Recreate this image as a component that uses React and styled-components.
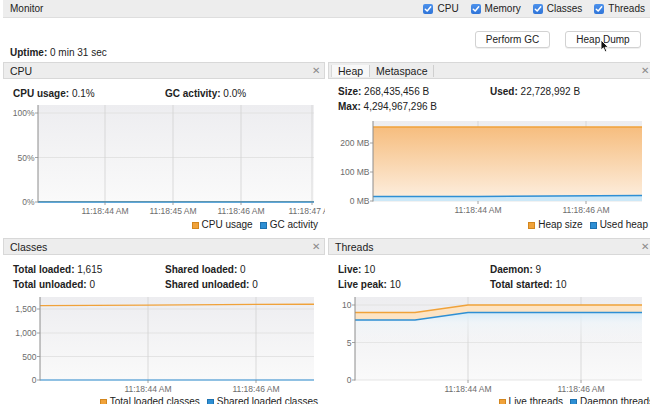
import React from "react";
import styled, { createGlobalStyle } from "styled-components";

const ORANGE = "#f0a23a";
const BLUE = "#2e8fd4";

const GlobalStyle = createGlobalStyle`
  html, body {
    margin: 0;
    padding: 0;
    background: #fff;
  }
  body {
    font-family: "Liberation Sans", Arial, sans-serif;
  }
`;

const Frame = styled.div`
  width: 650px;
  height: 404px;
  overflow: hidden;
  position: relative;
  background: #fff;
`;

const Inner = styled.div`
  width: 654px;
  height: 404px;
  box-sizing: border-box;
  padding-left: 3px;
  display: flex;
  flex-direction: column;
  font-family: "Liberation Sans", Arial, sans-serif;
  font-size: 10px;
  color: #222;
`;

const TopBar = styled.div`
  height: 18px;
  flex: none;
  box-sizing: border-box;
  background: #ededed;
  border-bottom: 1px solid #dedede;
  display: flex;
  align-items: center;
  justify-content: space-between;
  padding: 0 9px 0 7px;
`;

const Checks = styled.div`
  display: flex;
  align-items: center;
  gap: 12px;
`;

const CheckItem = styled.label`
  display: flex;
  align-items: center;
  gap: 4px;
`;

const Box = styled.span`
  width: 10px;
  height: 10px;
  border-radius: 2px;
  background: linear-gradient(#4d92ec, #2f74d8);
  display: flex;
  align-items: center;
  justify-content: center;
`;

const UptimeRow = styled.div`
  height: 44px;
  flex: none;
  display: flex;
  justify-content: space-between;
  align-items: flex-start;
  padding: 0 13px 0 7px;
`;

const Uptime = styled.div`
  margin-top: 29px;
  line-height: 12px;
  b {
    font-weight: bold;
  }
`;

const Buttons = styled.div`
  display: flex;
  gap: 15px;
  margin-top: 13px;
`;

const Button = styled.button`
  height: 17px;
  width: ${(p) => p.$w}px;
  padding: 0;
  background: #fff;
  border: 1px solid #d2d2d2;
  border-radius: 3px;
  box-shadow: 0 1px 0 rgba(0, 0, 0, 0.06);
  font-family: "Liberation Sans", Arial, sans-serif;
  font-size: 10px;
  color: #222;
`;

const Grid = styled.div`
  flex: 1;
  display: grid;
  grid-template-columns: 322px 326px;
  grid-template-rows: 174px 1fr;
  column-gap: 3px;
  row-gap: 2px;
  min-height: 0;
`;

const Panel = styled.div`
  display: flex;
  flex-direction: column;
  overflow: hidden;
  background: #fff;
`;

const PanelHeader = styled.div`
  height: 17px;
  flex: none;
  box-sizing: border-box;
  background: #ededed;
  border: 1px solid #d8d8d8;
  display: flex;
  align-items: stretch;
  justify-content: space-between;
  padding: 0 4px 0 ${(p) => (p.$tabs ? 2 : 6)}px;
  font-size: 10.5px;
`;

const Title = styled.div`
  display: flex;
  align-items: center;
`;

const Tab = styled.div`
  display: flex;
  align-items: center;
  padding: 0 6px;
  background: ${(p) => (p.$active ? "#f8f8f8" : "transparent")};
  border-right: 1px solid #cfcfcf;
  border-left: ${(p) => (p.$active ? "1px solid #d8d8d8" : "none")};
`;

const Close = styled.div`
  display: flex;
  align-items: center;
  color: #8a8a8a;
  font-size: 10px;
`;

const Stats = styled.div`
  display: grid;
  grid-template-columns: 152px 1fr;
  grid-auto-rows: 15px;
  align-content: start;
  box-sizing: border-box;
  padding: ${(p) => p.$top}px 10px 0;
  line-height: 15px;
  height: ${(p) => p.$h}px;
  flex: none;
  b {
    font-weight: bold;
  }
`;

const ChartSvg = styled.svg`
  display: block;
  flex: none;
  font-family: "Liberation Sans", Arial, sans-serif;
  font-size: 8.5px;
  text {
    fill: #6c6c6c;
  }
`;

const Legend = styled.div`
  display: flex;
  justify-content: flex-end;
  align-items: center;
  gap: 7px;
  padding-right: ${(p) => p.$pr}px;
  margin-top: ${(p) => p.$mt}px;
  line-height: 14px;
  font-size: 10px;
`;

const LegendItem = styled.div`
  display: flex;
  align-items: center;
  gap: 3px;
`;

const Swatch = styled.span`
  width: 7px;
  height: 7px;
  background: ${(p) => p.$c};
  border: 1px solid ${(p) => (p.$c === ORANGE ? "#d2861e" : "#1f72b0")};
  box-sizing: border-box;
`;

const Cursor = styled.svg`
  position: absolute;
  left: 600px;
  top: 39px;
`;

function Check({ label }) {
  return (
    <CheckItem>
      <Box>
        <svg width="8" height="8" viewBox="0 0 8 8">
          <path d="M1.3 4.2 L3.2 6 L6.7 1.8" stroke="#fff" strokeWidth="1.5" fill="none" strokeLinecap="round" strokeLinejoin="round" />
        </svg>
      </Box>
      {label}
    </CheckItem>
  );
}

function Chart({ width, height, x0, x1, top, bottom, yTicks, xTicks, id, children }) {
  return (
    <ChartSvg width={width} height={height}>
      <defs>
        <linearGradient id={id} x1="0" y1="0" x2="0" y2="1">
          <stop offset="0" stopColor="#ededf0" />
          <stop offset="1" stopColor="#fafafa" />
        </linearGradient>
      </defs>
      <rect x={x0} y={top} width={x1 - x0} height={bottom - top} fill={`url(#${id})`} />
      {yTicks.map((t) => (
        <line key={"gy" + t.label} x1={x0} x2={x1} y1={t.y} y2={t.y} stroke="#dedede" strokeWidth="0.8" />
      ))}
      {xTicks.map((t) => (
        <line key={"gx" + t.x} x1={t.x} x2={t.x} y1={top} y2={bottom} stroke="#d2d2d2" strokeWidth="0.8" />
      ))}
      {children}
      <line x1={x0} x2={x0} y1={top} y2={bottom + 0.5} stroke="#8c8c8c" strokeWidth="1" />
      {yTicks.map((t) => (
        <g key={"ly" + t.label}>
          <line x1={x0 - 3} x2={x0} y1={t.y} y2={t.y} stroke="#8c8c8c" strokeWidth="0.8" />
          <text x={x0 - 3.5} y={t.y + 3} textAnchor="end">
            {t.label}
          </text>
        </g>
      ))}
      {xTicks.map((t) => (
        <g key={"lx" + t.x}>
          <line x1={t.x} x2={t.x} y1={bottom} y2={bottom + 3} stroke="#8c8c8c" strokeWidth="0.8" />
          <text x={t.x} y={bottom + 12} textAnchor="middle">
            {t.label}
          </text>
        </g>
      ))}
    </ChartSvg>
  );
}

function Pointer() {
  return (
    <Cursor width="10" height="14" viewBox="0 0 10 14">
      <path d="M1 1 L1 11 L3.4 8.8 L5.2 12.8 L6.8 12.1 L5.1 8.3 L8.4 8.3 Z" fill="#111" stroke="#fff" strokeWidth="0.9" strokeLinejoin="round" />
    </Cursor>
  );
}

export default function App() {
  return (
    <Frame>
      <GlobalStyle />
      <Inner>
        <TopBar>
          <span>Monitor</span>
          <Checks>
            <Check label="CPU" />
            <Check label="Memory" />
            <Check label="Classes" />
            <Check label="Threads" />
          </Checks>
        </TopBar>

        <UptimeRow>
          <Uptime>
            <b>Uptime:</b> 0 min 31 sec
          </Uptime>
          <Buttons>
            <Button $w={75}>Perform GC</Button>
            <Button $w={76}>Heap Dump</Button>
          </Buttons>
        </UptimeRow>

        <Grid>
          <Panel>
            <PanelHeader>
              <Title>CPU</Title>
              <Close>✕</Close>
            </PanelHeader>
            <Stats $top={7} $h={22}>
              <div>
                <b>CPU usage:</b> 0.1%
              </div>
              <div>
                <b>GC activity:</b> 0.0%
              </div>
            </Stats>
            <Chart
              id="gcpu"
              width={322}
              height={116}
              x0={35}
              x1={311}
              top={4}
              bottom={101}
              yTicks={[
                { y: 12, label: "100%" },
                { y: 56.5, label: "50%" },
                { y: 101, label: "0%" },
              ]}
              xTicks={[
                { x: 102, label: "11:18:44 AM" },
                { x: 170, label: "11:18:45 AM" },
                { x: 238, label: "11:18:46 AM" },
                { x: 309, label: "11:18:47 AM" },
              ]}
            >
              <line x1={35} x2={311} y1={100.5} y2={100.5} stroke={ORANGE} strokeWidth="1.2" />
              <line x1={35} x2={311} y1={101} y2={101} stroke={BLUE} strokeWidth="1.4" />
            </Chart>
            <Legend $pr={7} $mt={1}>
              <LegendItem>
                <Swatch $c={ORANGE} />
                CPU usage
              </LegendItem>
              <LegendItem>
                <Swatch $c={BLUE} />
                GC activity
              </LegendItem>
            </Legend>
          </Panel>

          <Panel>
            <PanelHeader $tabs>
              <Title>
                <Tab $active>Heap</Tab>
                <Tab>Metaspace</Tab>
              </Title>
              <Close>✕</Close>
            </PanelHeader>
            <Stats $top={5} $h={35}>
              <div>
                <b>Size:</b> 268,435,456 B
              </div>
              <div>
                <b>Used:</b> 22,728,992 B
              </div>
              <div>
                <b>Max:</b> 4,294,967,296 B
              </div>
            </Stats>
            <Chart
              id="gheap"
              width={326}
              height={103}
              x0={45}
              x1={314}
              top={7}
              bottom={87}
              yTicks={[
                { y: 29, label: "200 MB" },
                { y: 58, label: "100 MB" },
                { y: 87, label: "0 MB" },
              ]}
              xTicks={[
                { x: 150, label: "11:18:44 AM" },
                { x: 258, label: "11:18:46 AM" },
              ]}
            >
              <defs>
                <linearGradient id="heapfill" x1="0" y1="0" x2="0" y2="1">
                  <stop offset="0" stopColor="#f6bd7e" />
                  <stop offset="1" stopColor="#fdf0e2" />
                </linearGradient>
              </defs>
              <rect x={45} y={13} width={269} height={74} fill="url(#heapfill)" />
              <line x1={45} x2={314} y1={13} y2={13} stroke={ORANGE} strokeWidth="1.3" />
              <path d="M45 82.5 L150 82.5 L314 81.5 L314 87 L45 87 Z" fill="#cde8f7" />
              <path d="M45 82.5 L150 82.5 L314 81.5" stroke={BLUE} strokeWidth="1.4" fill="none" />
            </Chart>
            <Legend $pr={6} $mt={1}>
              <LegendItem>
                <Swatch $c={ORANGE} />
                Heap size
              </LegendItem>
              <LegendItem>
                <Swatch $c={BLUE} />
                Used heap
              </LegendItem>
            </Legend>
          </Panel>

          <Panel>
            <PanelHeader>
              <Title>Classes</Title>
              <Close>✕</Close>
            </PanelHeader>
            <Stats $top={7} $h={38}>
              <div>
                <b>Total loaded:</b> 1,615
              </div>
              <div>
                <b>Shared loaded:</b> 0
              </div>
              <div>
                <b>Total unloaded:</b> 0
              </div>
              <div>
                <b>Shared unloaded:</b> 0
              </div>
            </Stats>
            <Chart
              id="gcls"
              width={322}
              height={100}
              x0={37}
              x1={311}
              top={4}
              bottom={87}
              yTicks={[
                { y: 16, label: "1,500" },
                { y: 40, label: "1,000" },
                { y: 63.5, label: "500" },
                { y: 87, label: "0" },
              ]}
              xTicks={[
                { x: 145, label: "11:18:44 AM" },
                { x: 253, label: "11:18:46 AM" },
              ]}
            >
              <path d="M37 12.6 L145 12.1 L253 11.4 L311 11.2" stroke={ORANGE} strokeWidth="1.4" fill="none" />
              <line x1={37} x2={311} y1={87} y2={87} stroke={BLUE} strokeWidth="1" />
            </Chart>
            <Legend $pr={7} $mt={2}>
              <LegendItem>
                <Swatch $c={ORANGE} />
                Total loaded classes
              </LegendItem>
              <LegendItem>
                <Swatch $c={BLUE} />
                Shared loaded classes
              </LegendItem>
            </Legend>
          </Panel>

          <Panel>
            <PanelHeader>
              <Title>Threads</Title>
              <Close>✕</Close>
            </PanelHeader>
            <Stats $top={7} $h={38}>
              <div>
                <b>Live:</b> 10
              </div>
              <div>
                <b>Daemon:</b> 9
              </div>
              <div>
                <b>Live peak:</b> 10
              </div>
              <div>
                <b>Total started:</b> 10
              </div>
            </Stats>
            <Chart
              id="gthr"
              width={326}
              height={100}
              x0={27}
              x1={314}
              top={4}
              bottom={87}
              yTicks={[
                { y: 12, label: "10" },
                { y: 49.5, label: "5" },
                { y: 87, label: "0" },
              ]}
              xTicks={[
                { x: 140, label: "11:18:44 AM" },
                { x: 253, label: "11:18:46 AM" },
              ]}
            >
              <defs>
                <linearGradient id="thrblue" x1="0" y1="0" x2="0" y2="1">
                  <stop offset="0" stopColor="#d4ebf8" />
                  <stop offset="0.15" stopColor="#eef6fb" stopOpacity="0.6" />
                  <stop offset="0.5" stopColor="#fafafa" stopOpacity="0" />
                </linearGradient>
              </defs>
              <path d="M27 19.5 L87 19.5 L140 12 L314 12 L314 19.5 L140 19.5 L87 27 L27 27 Z" fill="#fde4c4" />
              <path d="M27 27 L87 27 L140 19.5 L314 19.5 L314 87 L27 87 Z" fill="url(#thrblue)" />
              <path d="M27 19.5 L87 19.5 L140 12 L314 12" stroke={ORANGE} strokeWidth="1.4" fill="none" />
              <path d="M27 27 L87 27 L140 19.5 L314 19.5" stroke={BLUE} strokeWidth="1.4" fill="none" />
            </Chart>
            <Legend $pr={0} $mt={2}>
              <LegendItem>
                <Swatch $c={ORANGE} />
                Live threads
              </LegendItem>
              <LegendItem>
                <Swatch $c={BLUE} />
                Daemon threads
              </LegendItem>
            </Legend>
          </Panel>
        </Grid>
      </Inner>
      <Pointer />
    </Frame>
  );
}
